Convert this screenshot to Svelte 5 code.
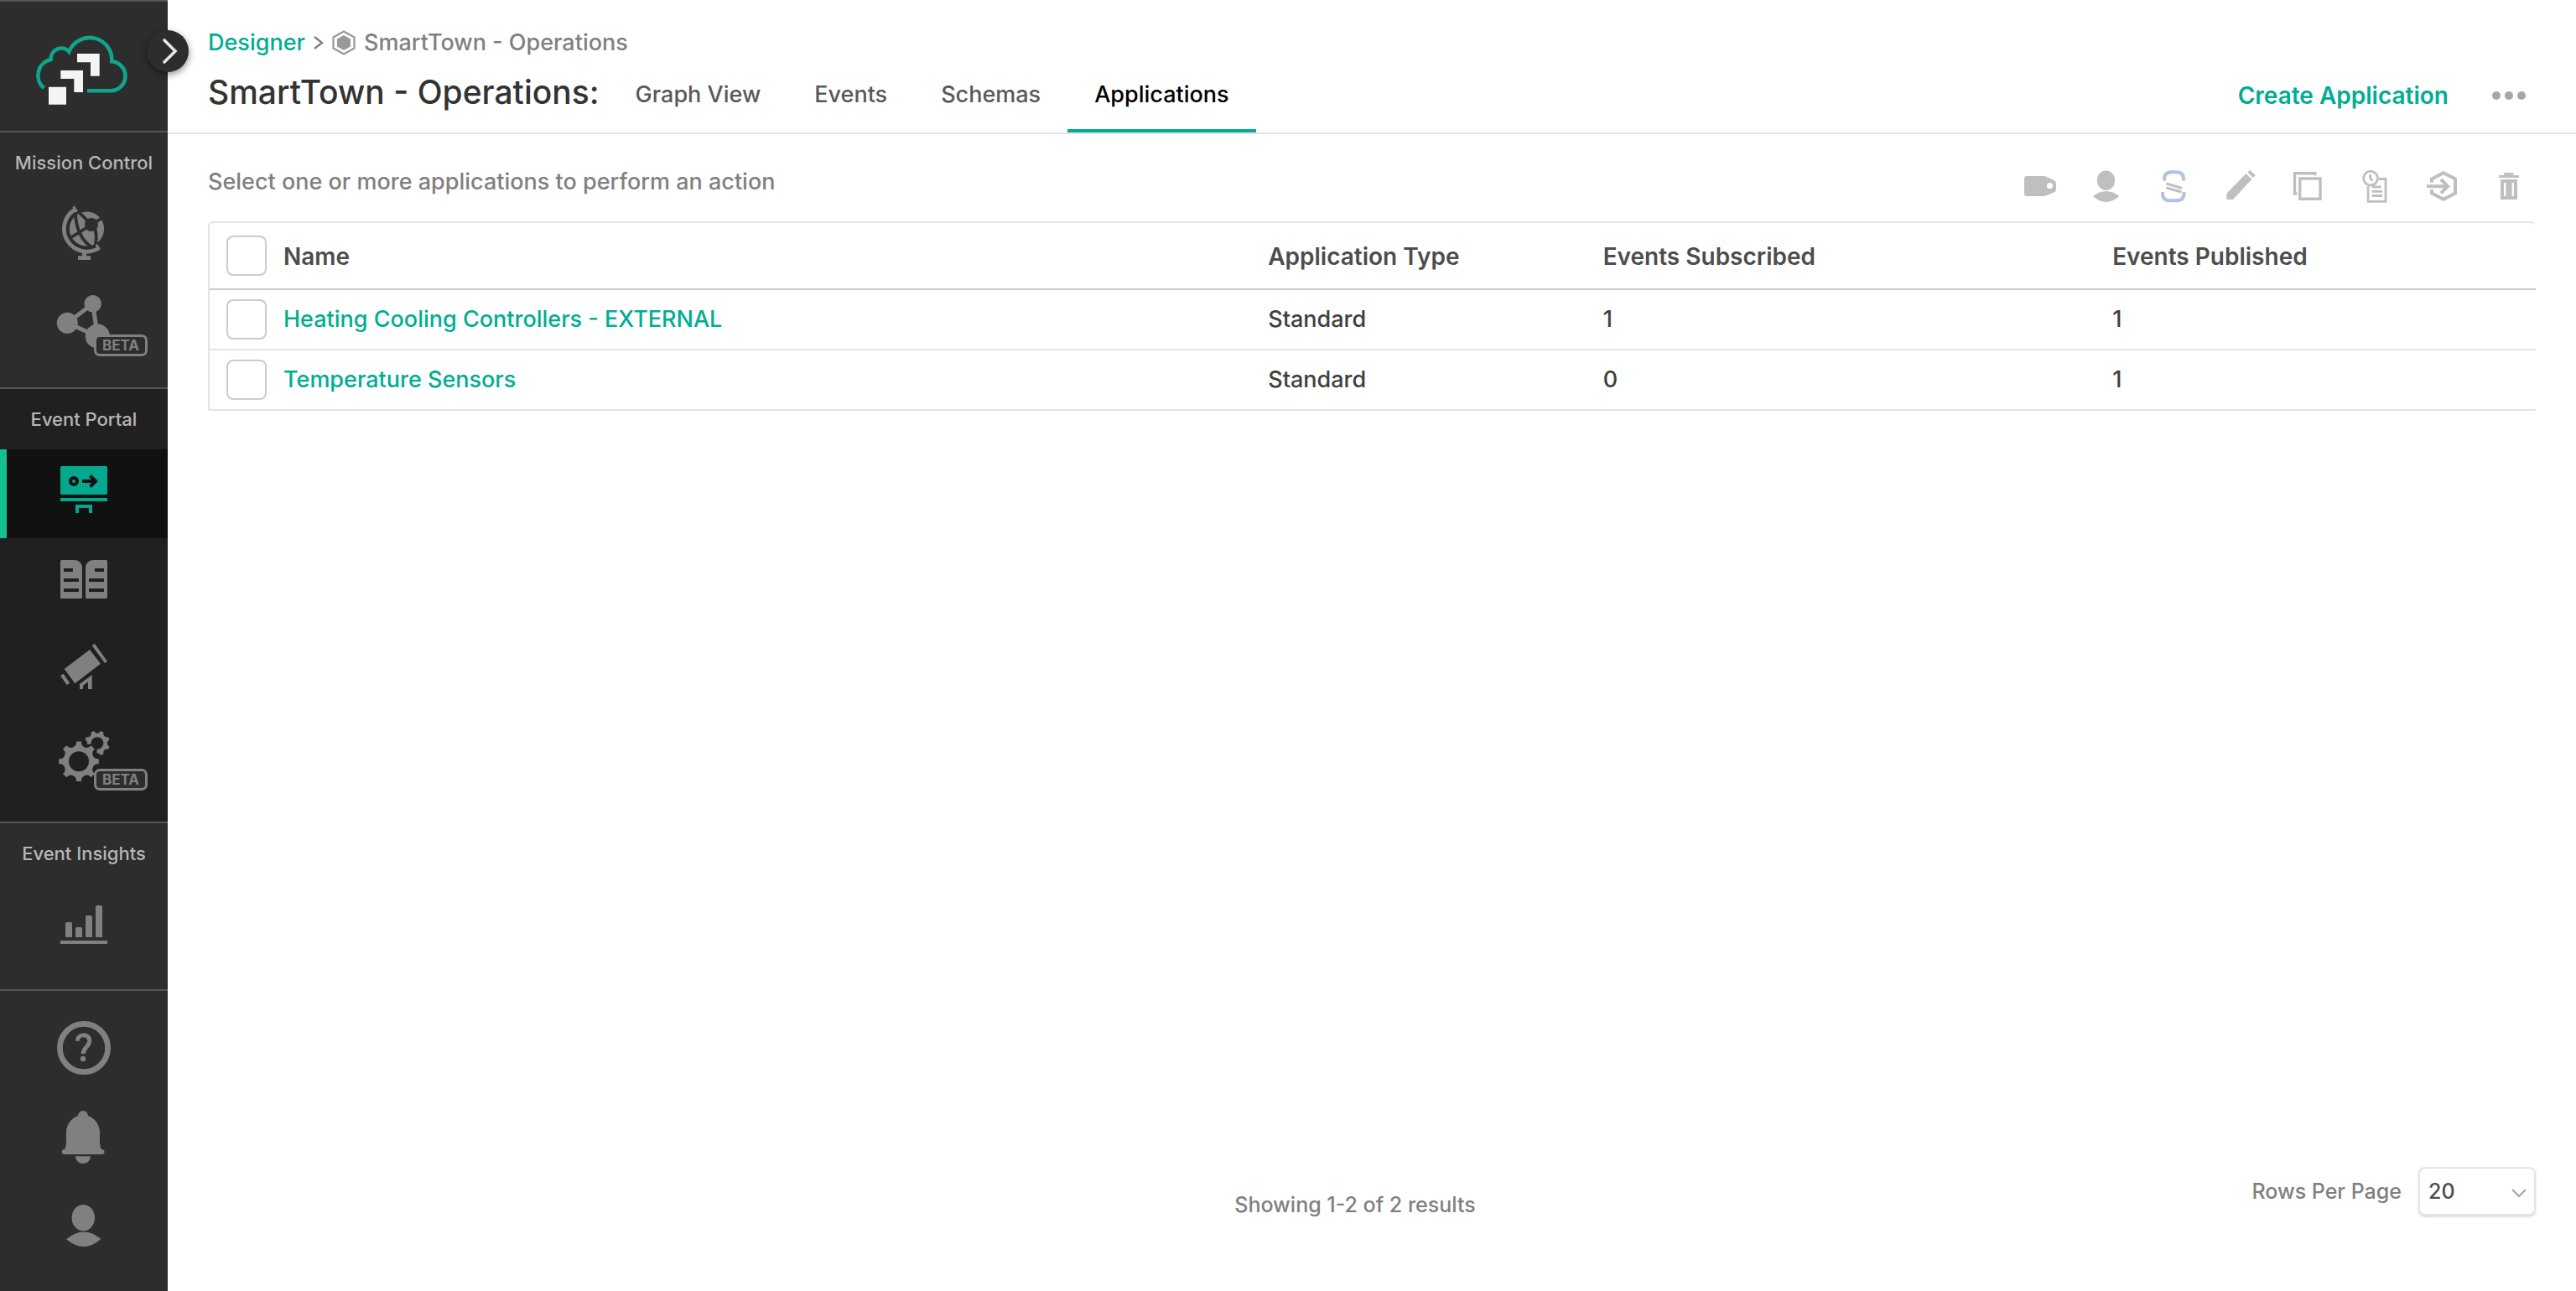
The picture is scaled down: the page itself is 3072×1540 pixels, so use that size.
<script>
  const columns = ['Name', 'Application Type', 'Events Subscribed', 'Events Published'];
  const applications = [
    { name: 'Heating Cooling Controllers - EXTERNAL', type: 'Standard', subscribed: 1, published: 1 },
    { name: 'Temperature Sensors', type: 'Standard', subscribed: 0, published: 1 }
  ];
  const tabs = ['Graph View', 'Events', 'Schemas', 'Applications'];
  const activeTab = 'Applications';

  // Eight-toothed gear outline with scooped valleys between the teeth.
  function gear(cx, cy, outer, valley, offset) {
    const half = 0.13;
    const point = (a) => `${(cx + outer * Math.cos(a)).toFixed(2)} ${(cy + outer * Math.sin(a)).toFixed(2)}`;
    let d = '';
    for (let i = 0; i < 8; i++) {
      const a = offset + (i * Math.PI) / 4;
      d += i === 0 ? `M${point(a - half)}` : `A${valley} ${valley} 0 0 0 ${point(a - half)}`;
      d += `L${point(a + half)}`;
    }
    return d + `A${valley} ${valley} 0 0 0 ${point(offset - half)}Z`;
  }
  const bigGear = gear(94, 54.3, 24, 6.4, 0);
  const smallGear = gear(116, 32.5, 15, 4.2, Math.PI / 8);
</script>

<div class="app">
  <aside class="sidebar">
    <a class="logo" href="#home" aria-label="Home">
      <svg viewBox="0 1 200 154">
        <path d="M52.5 104A19.4 19.4 0 0 1 60.7 70A12.5 12.5 0 0 1 82.3 60.5A26.5 26.5 0 0 1 133.3 72.3A17.5 17.5 0 0 1 133.3 107.2H104" fill="none" stroke="#0fa58c" stroke-width="4.6" stroke-miterlimit="8" />
        <path d="M58 102.7h21v21h-21zM72.3 83H99v26H88.3V93H72.3zM92 63h26.7v26.7H108V73.3H92z" fill="#f4f4f4" />
      </svg>
    </a>

    <nav class="group" aria-label="Mission Control">
      <h2>Mission Control</h2>
      <a class="item" href="#cluster" aria-label="Cluster Manager">
        <svg viewBox="0 0 200 106">
          <circle cx="103.5" cy="43" r="20.6" />
          <g class="cut" fill="none" stroke-width="3.8">
            <path d="M109 38L95 24M109 38L124 28.5M109 38L82 55M112 40Q117 50 113 66M90 22C90 44 98 58 111 66" />
          </g>
          <circle class="cutfill" cx="109" cy="38" r="8" />
          <g fill="none" stroke="#808080">
            <path d="M89.2 20.1A27 27 0 1 0 117.7 66" stroke-width="4.8" />
            <path d="M87.6 16.4L91.6 22.6M114.8 61.8L118.6 68" stroke-width="3" />
          </g>
          <path d="M98 69h5v6.3h5V80H93v-4.7h5z" />
        </svg>
      </a>
      <a class="item" href="#mesh" aria-label="Mesh Manager">
        <svg viewBox="0 0 200 106">
          <path d="M116.3 65L80.3 49.3L110.7 26.3Z" fill="none" stroke="#808080" stroke-width="5" />
          <circle cx="80.3" cy="49.3" r="12.5" /><circle cx="110.7" cy="26.3" r="10.3" /><circle cx="116.3" cy="65" r="14.6" />
        </svg>
        <span class="beta">BETA</span>
      </a>
    </nav>

    <nav class="group dark" aria-label="Event Portal">
      <h2>Event Portal</h2>
      <a class="item active" href="#designer" aria-label="Designer" aria-current="page">
        <svg viewBox="0 0 200 106">
          <rect x="72" y="20" width="56" height="34" rx="1.5" />
          <path d="M72 58h56v4H72zM90 66h20v10h-4v-6H94v6h-4z" />
          <g fill="none" stroke="#111" stroke-width="4"><circle cx="88" cy="38" r="4" /><path d="M98 38h16M107.5 31.5L114 38L107.5 44.5" /></g>
        </svg>
      </a>
      <a class="item" href="#catalog" aria-label="Catalog">
        <svg viewBox="0 0 200 106">
          <path d="M73.5 26H89a9 9 0 0 1 9 9v35.5a1.5 1.5 0 0 1-1.5 1.5h-23a1.5 1.5 0 0 1-1.5-1.5v-43a1.5 1.5 0 0 1 1.5-1.5zM126.5 26H111a9 9 0 0 0-9 9v35.5a1.5 1.5 0 0 0 1.5 1.5h23a1.5 1.5 0 0 0 1.5-1.5v-43a1.5 1.5 0 0 0-1.5-1.5z" />
          <path d="M76 38h11M76 50h18M76 62h18M113 38h11M106 50h18M106 62h18" stroke="#202020" stroke-width="4" />
        </svg>
      </a>
      <a class="item" href="#discovery" aria-label="Discovery">
        <svg viewBox="0 0 200 106">
          <path d="M107 27L120 43.7L89.3 67.3L76.7 50ZM109.7 22L112.7 19.7L128 40.7L125 43ZM72 58L75.7 55.7L83.3 66.7L79.7 69ZM95 74V68L109.7 57V74H105V65.3L99 70V74Z" />
        </svg>
      </a>
      <a class="item" href="#runtime" aria-label="Runtime Event Manager">
        <svg viewBox="0 0 200 106">
          <path d={smallGear} />
          <circle class="darkfill" cx="116" cy="32.5" r="7.3" />
          <path class="darkfill" d="M116 32.5L104 34L96 38V56H112L115.5 44Z" />
          <path d={bigGear} />
          <circle class="darkfill" cx="94" cy="54.3" r="12" />
        </svg>
        <span class="beta">BETA</span>
      </a>
    </nav>

    <nav class="group" aria-label="Event Insights">
      <h2>Event Insights</h2>
      <a class="item" href="#insights" aria-label="Insights">
        <svg viewBox="0 0 200 106">
          <path d="M78 64V48q0-2 2-2h4q2 0 2 2v16zM90 64V54q0-2 2-2h4q2 0 2 2v10zM102 64V40q0-2 2-2h4q2 0 2 2v24zM114 64V28q0-2 2-2h4q2 0 2 2v36zM72 68h56v4H72z" />
        </svg>
      </a>
    </nav>

    <nav class="group account" aria-label="Account">
      <a class="item" href="#help" aria-label="Help">
        <svg viewBox="0 0 200 106">
          <circle cx="100" cy="52" r="28.6" fill="none" stroke="#808080" stroke-width="6.8" />
          <path d="M92.4 43.8C92.4 34.6 106.8 34.6 106.8 43.6C106.8 50.6 99.2 51.5 99.2 59" fill="none" stroke="#808080" stroke-width="5" />
          <circle cx="99" cy="65" r="3.2" />
        </svg>
      </a>
      <a class="item" href="#notifications" aria-label="Notifications">
        <svg viewBox="0 0 200 106">
          <path d="M93 27a6 6 0 1 1 12 0C113.5 30 119 38 119 47v10c0 4 .5 7.5 2 10a3 3 0 0 1 1 6H76.5a3 3 0 0 1 .5-6c1.5-2.5 2-6 2-10V47C79 38 84.5 30 93 27zM90 75.3h18a9 8.7 0 0 1-18 0z" />
        </svg>
      </a>
      <a class="item" href="#user" aria-label="User">
        <svg viewBox="0 0 200 106">
          <ellipse cx="99.3" cy="42.7" rx="13.7" ry="15.8" />
          <path d="M79 68.3Q100 51 120.3 68Q100 86 79 68.3Z" />
        </svg>
      </a>
    </nav>

    <button class="expand" aria-label="Expand menu">
      <svg viewBox="0 0 50 50"><path d="M21 12L34 25L21 38" fill="none" stroke="#e6e6e6" stroke-width="3.6" stroke-linecap="round" /></svg>
    </button>
  </aside>

  <main>
    <header>
      <nav class="crumbs" aria-label="Breadcrumb">
        <a href="#designer">Designer</a>
        <svg class="sep" viewBox="0 0 12 18"><path d="M1 2L10 9L1 16" fill="none" stroke="#808080" stroke-width="2.4" /></svg>
        <svg class="hex" viewBox="0 0 28 30">
          <path d="M14 1.5L26.5 8.5V21.5L14 28.5L1.5 21.5V8.5Z" fill="none" stroke="#999" stroke-width="2.2" />
          <path d="M14 6L22 10.5V19.5L14 24L6 19.5V10.5Z" fill="#999" />
        </svg>
        <span>SmartTown - Operations</span>
      </nav>
      <div class="titlebar">
        <h1>SmartTown - Operations:</h1>
        <nav class="tabs" aria-label="Views">
          {#each tabs as tab}
            <a href="#{tab}" class:current={tab === activeTab}>{tab}</a>
          {/each}
        </nav>
        <button class="create">Create Application</button>
        <button class="more" aria-label="More actions">
          <svg viewBox="0 0 40 40"><circle cx="5" cy="20" r="5" /><circle cx="20" cy="20" r="5" /><circle cx="35" cy="20" r="5" /></svg>
        </button>
      </div>
    </header>

    <section class="content">
      <div class="toolbar">
        <p>Select one or more applications to perform an action</p>
        <div class="actions">
          <button aria-label="Tag" disabled>
            <svg viewBox="0 0 40 40"><path fill-rule="evenodd" d="M5 8H26.5L37.5 13Q40 14.5 40 17V24Q40 26 37.5 27.5L26.5 32H5Q2 32 2 29V11Q2 8 5 8ZM32.4 16a3.6 3.6 0 1 0 .1 0z" /></svg>
          </button>
          <button aria-label="Change owner" disabled>
            <svg viewBox="0 0 40 40"><ellipse cx="19.5" cy="13.2" rx="10.6" ry="11.8" /><path d="M4 32Q19.5 20 35.4 32Q19.5 46 4 32Z" /></svg>
          </button>
          <button aria-label="Schema" disabled>
            <svg viewBox="0 0 40 40">
              <path d="M9 13.5V12Q9 3.3 17.5 3.3H23.5Q32 3.3 32 12V13.5M7 27V28.5Q7 37.3 15.5 37.3H24Q32.5 37.3 32.5 28.5V27" fill="none" stroke="#afc2df" stroke-width="4" />
              <path d="M11.4 17L30 22.5M11.4 22L29.5 27" fill="none" stroke="#bfbfbf" stroke-width="3" />
            </svg>
          </button>
          <button aria-label="Edit" disabled>
            <svg viewBox="0 0 40 40"><path d="M3.4 36V28.7L26.3 5.3L33.4 11.8L10.9 36ZM28.3 3.6L31.2 1L37.8 7.3L35 10Z" /></svg>
          </button>
          <button aria-label="Duplicate" disabled>
            <svg viewBox="0 0 40 40"><path d="M28.8 7.2V4.7H4.5V29H7.5M10.7 11H35V35.3H10.7Z" fill="none" stroke="#bfbfbf" stroke-width="3.4" /></svg>
          </button>
          <button aria-label="Version history" disabled>
            <svg viewBox="0 0 40 40"><path d="M15 2.3a8.3 8.3 0 1 0 .1 0zM14.6 6V11L17.6 13.5M25 11.5H33V38.3H12V20M16.8 21H27.5M16.8 26.3H29M16.8 31.5H29" fill="none" stroke="#bfbfbf" stroke-width="2.8" /></svg>
          </button>
          <button aria-label="Move" disabled>
            <svg viewBox="0 0 40 40"><path d="M8 15.5V11.5L22 4.2L36 11.5V28.5L22 35.8L8 28.5V24M2 20.2H27M19 12L27 20.2L19 28.4" fill="none" stroke="#bfbfbf" stroke-width="4" /></svg>
          </button>
          <button aria-label="Delete" disabled>
            <svg viewBox="0 0 40 40"><path fill-rule="evenodd" d="M14.3 7V4H25.3V7H32V10H8.2V7ZM10 12H30V36H10ZM14 16V32H16.4V16ZM23.6 16V32H26V16Z" /></svg>
          </button>
        </div>
      </div>

      <table>
        <thead>
          <tr>
            <th class="check"><input type="checkbox" aria-label="Select all applications" /></th>
            {#each columns as column}<th scope="col">{column}</th>{/each}
          </tr>
        </thead>
        <tbody>
          {#each applications as app}
            <tr>
              <td class="check"><input type="checkbox" aria-label="Select {app.name}" /></td>
              <td><a href="#application">{app.name}</a></td>
              <td>{app.type}</td>
              <td>{app.subscribed}</td>
              <td>{app.published}</td>
            </tr>
          {/each}
        </tbody>
      </table>
    </section>

    <footer>
      <p>Showing 1-2 of 2 results</p>
      <div class="paging">
        <label for="rows">Rows Per Page</label>
        <div class="select">
          <select id="rows"><option>20</option><option>50</option><option>100</option></select>
          <svg viewBox="0 0 18 12"><path d="M1 2L9 10L17 2" fill="none" stroke="#a6a6a6" stroke-width="2.2" /></svg>
        </div>
      </div>
    </footer>
  </main>
</div>

<style>
  :global(body) { background: #fff; }
  .app { display: flex; min-height: 100vh; font-family: Inter, "Liberation Sans", sans-serif; font-size: 27px; font-weight: 450; line-height: 36px; color: #404040; }
  .app * { box-sizing: border-box; }
  svg { display: block; }
  h1, h2, p { margin: 0; font-weight: 450; }
  a { color: #00ad93; text-decoration: none; }
  button { padding: 0; border: 0; background: none; font: inherit; }

  .sidebar { position: relative; flex: none; display: flex; flex-direction: column; width: 200px; background: #2d2d2d; border-top: 2px solid #555; }
  .sidebar svg { width: 100%; fill: #808080; }
  .group { padding-bottom: 20px; border-top: 2px solid #555; }
  .dark { background: #202020; }
  h2 { font-size: 22px; line-height: 72px; text-align: center; color: #b6b6b6; white-space: nowrap; }
  .item { position: relative; display: block; height: 106px; }
  .active { background: #111; box-shadow: inset 8px 0 #13c090; }
  .sidebar .active svg { fill: #03a88f; }
  .account { padding-top: 16px; }
  .cut { stroke: #2d2d2d; }
  .cutfill { fill: #2d2d2d; }
  .darkfill { fill: #202020; }
  .beta { position: absolute; left: 112px; top: 63px; width: 64px; height: 26px; border: 3px solid #808080; border-radius: 7px; background: #2d2d2d; color: #808080; font-size: 17px; font-weight: 700; line-height: 20px; text-align: center; }
  .expand { position: absolute; top: 34px; right: -25px; width: 50px; height: 50px; border-radius: 50%; background: #2d2d2d; box-shadow: 0 3px 8px rgba(0, 0, 0, 0.45); }

  main { flex: 1; display: flex; flex-direction: column; min-width: 0; }
  header { padding: 32px 48px 0; border-bottom: 2px solid #e4e4e4; }
  .crumbs { display: flex; align-items: center; gap: 10px; line-height: 38px; color: #808080; }
  .sep { width: 12px; height: 18px; }
  .hex { width: 28px; height: 30px; }
  .titlebar { display: flex; align-items: stretch; height: 88px; line-height: 84px; white-space: nowrap; }
  h1 { font-size: 39px; line-height: 80px; color: #333; margin-right: 11px; }
  .tabs { display: flex; margin-right: auto; }
  .tabs a { padding: 0 32px; border-bottom: 4px solid transparent; line-height: 86px; color: #595959; }
  .tabs .current { border-color: #00ad93; color: #000; }
  .create { margin-right: 52px; font-weight: 600; font-size: 28px; color: #00ad93; }
  .more svg { width: 40px; fill: #a6a6a6; }
  .more { margin-right: 12px; }

  .content { flex: 1; padding: 42px 48px 0; }
  .toolbar { display: flex; justify-content: space-between; padding: 0 12px 22px 0; line-height: 30px; color: #808080; }
  .actions { display: flex; gap: 40px; }
  .actions svg { width: 40px; height: 40px; fill: #bfbfbf; }

  table { width: 100%; table-layout: fixed; border-collapse: separate; border-spacing: 0; border-top: 2px solid #e4e4e4; border-left: 2px solid #e4e4e4; border-radius: 6px 6px 0 0; text-align: left; }
  th, td { padding: 0; height: 72px; border-bottom: 2px solid #e4e4e4; }
  th { height: 80px; padding-top: 2px; border-color: #ccc; font-size: 28px; font-weight: 600; color: #4d4d4d; }
  .check { width: 88px; padding: 0 0 0 20px; }
  th:nth-child(3) { width: 14.4%; }
  th:nth-child(4) { width: 21.9%; }
  th:nth-child(5) { width: 18.2%; }
  input { appearance: none; display: block; width: 48px; height: 48px; margin: 0; border: 2px solid #ccc; border-radius: 8px; background: #fff; }

  footer { display: grid; grid-template-columns: 1fr auto 1fr; align-items: end; padding: 0 48px 90px 8px; font-size: 25px; line-height: 26px; color: #808080; }
  footer p { grid-column: 2; }
  .paging { display: flex; justify-content: flex-end; align-items: center; gap: 20px; }
  .select { position: relative; }
  select { appearance: none; display: block; width: 140px; height: 58px; padding: 0 10px; border: 2px solid #e4e4e4; border-radius: 8px; background: #fff; box-shadow: 0 2px 3px rgba(0, 0, 0, 0.14); font: inherit; font-weight: 500; color: #4d4d4d; }
  .select svg { position: absolute; right: 11px; top: 25px; width: 18px; height: 12px; pointer-events: none; }
</style>
